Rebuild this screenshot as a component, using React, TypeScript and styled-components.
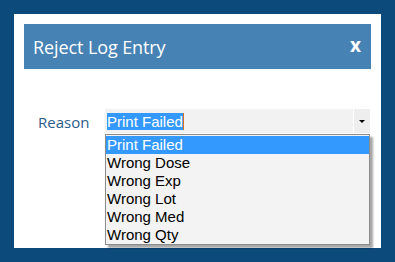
import React from "react";
import styled, { createGlobalStyle } from "styled-components";

const Global = createGlobalStyle`
  html, body { margin: 0; padding: 0; }
  body { background: #0c4a7c; width: 395px; height: 262px; overflow: hidden; }
`;

const Backdrop = styled.div`
  box-sizing: border-box;
  width: 395px;
  height: 262px;
  padding: 14px 14px 14px 14px;
`;

const Panel = styled.div`
  box-sizing: border-box;
  width: 367px;
  height: 234px;
  background: #ffffff;
  padding: 10px 10px 0 10px;
  display: flex;
  flex-direction: column;
`;

const Header = styled.div`
  height: 45px;
  background: #4682b4;
  display: flex;
  align-items: center;
  justify-content: space-between;
  padding: 0 10px 0 9px;
  color: #ffffff;
`;

const Title = styled.span`
  font-family: "Open Sans", sans-serif;
  font-size: 18px;
  letter-spacing: -0.1px;
`;

const Close = styled.span`
  font-family: "Open Sans", sans-serif;
  font-weight: 700;
  font-size: 19px;
  line-height: 1;
  margin-top: -2px;
`;

const Row = styled.div`
  display: flex;
  align-items: center;
  margin-top: 40px;
  padding-left: 14px;
`;

const Label = styled.label`
  font-family: "Open Sans", sans-serif;
  font-size: 15px;
  color: #2a5b8a;
  width: 67px;
  margin-top: 1px;
`;

const SelectWrap = styled.div`
  position: relative;
  width: 265px;
`;

const SelectBox = styled.div`
  height: 24px;
  background: #f2f2f2;
  display: flex;
  align-items: stretch;
`;

const Value = styled.div`
  flex: 1;
  display: flex;
  align-items: center;
  padding-left: 2px;
`;

const Highlight = styled.span`
  font-family: "Liberation Sans", Arial, sans-serif;
  font-size: 15px;
  line-height: 17px;
  background: #3399ff;
  color: #ffffff;
  border-right: 1px solid #d07020;
`;

const ArrowButton = styled.div`
  width: 16px;
  border-left: 1px solid #ffffff;
  background: #eeeeee;
  display: flex;
  align-items: center;
  justify-content: center;
`;

const Arrow = styled.div`
  width: 0;
  height: 0;
  border-left: 3px solid transparent;
  border-right: 3px solid transparent;
  border-top: 3px solid #000000;
  margin-top: 1px;
`;

const List = styled.ul`
  position: absolute;
  left: 0;
  top: 25px;
  width: 265px;
  box-sizing: border-box;
  margin: 0;
  padding: 1px 0 0 0;
  list-style: none;
  background: #f3f3f3;
  border: 1px solid #8c8c8c;
  box-shadow: 3px 3px 2px rgba(0, 0, 0, 0.35);
`;

const Item = styled.li<{ $active?: boolean }>`
  height: 18px;
  line-height: 18px;
  padding-left: 1px;
  font-family: "Liberation Sans", Arial, sans-serif;
  font-size: 15px;
  color: ${(p) => (p.$active ? "#ffffff" : "#000000")};
  background: ${(p) => (p.$active ? "#3399ff" : "transparent")};
`;

const options = ["Print Failed", "Wrong Dose", "Wrong Exp", "Wrong Lot", "Wrong Med", "Wrong Qty"];

export default function App() {
  return (
    <>
      <Global />
      <Backdrop>
        <Panel>
          <Header>
            <Title>Reject Log Entry</Title>
            <Close>x</Close>
          </Header>
          <Row>
            <Label>Reason</Label>
            <SelectWrap>
              <SelectBox>
                <Value>
                  <Highlight>Print Failed</Highlight>
                </Value>
                <ArrowButton>
                  <Arrow />
                </ArrowButton>
              </SelectBox>
              <List>
                {options.map((o, i) => (
                  <Item key={o} $active={i === 0}>
                    {o}
                  </Item>
                ))}
              </List>
            </SelectWrap>
          </Row>
        </Panel>
      </Backdrop>
    </>
  );
}
